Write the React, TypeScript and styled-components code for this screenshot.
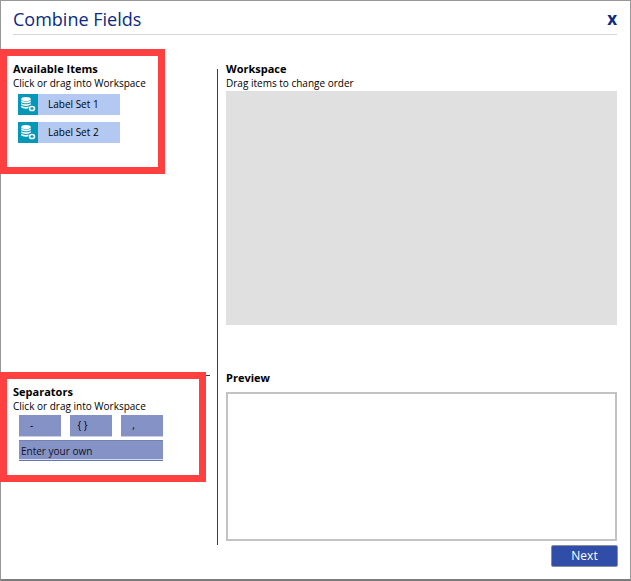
import React from "react";
import styled, { createGlobalStyle } from "styled-components";

const GlobalStyle = createGlobalStyle`
  *, *::before, *::after { box-sizing: border-box; }
  body {
    margin: 0;
    background: #fff;
    color: #000;
    font: 10px/15px "Open Sans", "Noto Sans", sans-serif;
  }
  button, input { font: inherit; color: inherit; }
`;

const Dialog = styled.main`
  display: flex;
  flex-direction: column;
  min-height: 100vh;
  border: 1px solid #989898;
  border-bottom: 2px solid #7c7c7c;
`;

const Header = styled.header`
  display: flex;
  align-items: center;
  justify-content: space-between;
  height: 34px;
  margin: 0 13px 0 12px;
  padding-top: 3px;
  border-bottom: 1px solid #d6d6d6;
`;

const Title = styled.h1`
  margin: 0;
  color: #0b2a80;
  font-size: 18px;
  line-height: 26px;
  font-weight: 400;
`;

const CloseButton = styled.button`
  padding: 0;
  border: 0;
  background: none;
  color: #0b2a80;
  font-size: 17px;
  line-height: 20px;
  font-weight: 700;
  cursor: pointer;
`;

const Body = styled.div`
  flex: 1;
  display: grid;
  grid-template-columns: 216px 1px minmax(0, 1fr);
`;

const Sources = styled.div`
  display: flex;
  flex-direction: column;
  justify-content: space-between;
  padding: 14px 0 63px;
`;

const Divider = styled.div`
  margin-top: 34px;
  background: #3c3c3c;
`;

const Highlight = styled.section<{ $wide?: boolean }>`
  width: ${(p) => (p.$wide ? "206px" : "165px")};
  min-height: ${(p) => (p.$wide ? "110px" : "125px")};
  margin-left: -1px;
  padding: 5px 6px 0;
  border: 7px solid #ff4040;
`;

const SeparatorRow = styled.div`
  display: flex;
  align-items: flex-start;
`;

const Tick = styled.div`
  width: 4px;
  height: 1px;
  margin-top: 3px;
  background: #3c3c3c;
`;

const Heading = styled.h2`
  margin: 0;
  font-size: 11px;
  line-height: 15px;
  font-weight: 700;
`;

const Hint = styled.p`
  margin: 0;
  line-height: 15px;
  white-space: nowrap;
`;

const ItemList = styled.div`
  display: flex;
  flex-direction: column;
  align-items: flex-start;
  gap: 7px;
  padding: 3px 0 0 5px;
`;

const ItemButton = styled.button`
  display: flex;
  align-items: center;
  width: 102px;
  height: 21px;
  padding: 0;
  border: 0;
  background: #b3c9f1;
  cursor: grab;
`;

const ItemIcon = styled.span`
  display: grid;
  place-items: center;
  width: 20px;
  height: 21px;
  margin-right: 10px;
  background: #0597b7;
`;

const SeparatorGrid = styled.div`
  display: grid;
  grid-template-columns: repeat(3, 42px);
  gap: 3px 9px;
  padding: 1px 0 0 6px;
`;

const SeparatorButton = styled.button`
  height: 22px;
  padding: 0 17px 0 0;
  border: 1px solid #c8d0e8;
  border-width: 0 0 1px;
  background: #8592c6;
  cursor: grab;
`;

const CustomSeparator = styled.input`
  grid-column: 1 / -1;
  width: 100%;
  height: 21px;
  padding: 0 2px;
  border: 0;
  border-top: 1px solid #7480ad;
  border-bottom: 1px solid #6676b4;
  border-radius: 0;
  background: #8592c6;
  box-shadow: inset 0 -1px #d3daee;
  &::placeholder { color: #10131f; opacity: 1; }
`;

const Output = styled.div`
  display: flex;
  flex-direction: column;
  padding: 26px 13px 0 8px;
`;

const WorkspaceArea = styled.div`
  flex: 1 1 234px;
  min-height: 160px;
  margin-bottom: 45px;
  background: #e0e0e0;
`;

const PreviewArea = styled.div`
  flex: 1 1 149px;
  min-height: 75px;
  margin: 7px 0 4px;
  border: 2px solid #c3c3c3;
`;

const Footer = styled.footer`
  display: flex;
  justify-content: flex-end;
  padding: 0 12px 12px;
`;

const NextButton = styled.button`
  width: 67px;
  height: 22px;
  padding: 0;
  border: 1px solid #8a8f9c;
  border-radius: 2px;
  background: #304da8;
  color: #fff;
  font-size: 12px;
  line-height: 20px;
  cursor: pointer;
`;

function DatabaseIcon() {
  return (
    <svg width="20" height="21" viewBox="0 0 20 21" aria-hidden="true">
      <g fill="#fff">
        <ellipse cx="8" cy="5" rx="4.800" ry="2" />
        <path d="M3.200 6.200c1 1.700 8.600 1.700 9.600 0v1.700c-1 1.900-8.600 1.900-9.600 0z" />
        <path d="M3.200 8.900c1 1.700 8.600 1.700 9.600 0v1.700c-1 1.900-8.600 1.900-9.600 0z" />
        <path d="M3.200 11.600c1 1.700 8.600 1.700 9.600 0v1.700c-1 1.900-8.600 1.900-9.600 0z" />
      </g>
      <circle cx="14" cy="14.500" r="3.700" fill="#0597b7" />
      <ellipse cx="14" cy="14.500" rx="2.500" ry="2.100" fill="none" stroke="#fff" strokeWidth="1.500" />
    </svg>
  );
}

const items = ["Label Set 1", "Label Set 2"];
const separators = ["-", "{ }", ","];

export default function App() {
  return (
    <>
      <GlobalStyle />
      <Dialog aria-labelledby="dialog-title">
        <Header>
          <Title id="dialog-title">Combine Fields</Title>
          <CloseButton type="button" aria-label="Close">x</CloseButton>
        </Header>
        <Body>
          <Sources>
            <Highlight>
              <Heading>Available Items</Heading>
              <Hint>Click or drag into Workspace</Hint>
              <ItemList>
                {items.map((item) => (
                  <ItemButton type="button" key={item}>
                    <ItemIcon><DatabaseIcon /></ItemIcon>
                    {item}
                  </ItemButton>
                ))}
              </ItemList>
            </Highlight>
            <SeparatorRow>
              <Highlight $wide>
                <Heading>Separators</Heading>
                <Hint>Click or drag into Workspace</Hint>
                <SeparatorGrid>
                  {separators.map((separator) => (
                    <SeparatorButton type="button" key={separator}>{separator}</SeparatorButton>
                  ))}
                  <CustomSeparator aria-label="Custom separator" placeholder="Enter your own" />
                </SeparatorGrid>
              </Highlight>
              <Tick />
            </SeparatorRow>
          </Sources>
          <Divider />
          <Output>
            <Heading>Workspace</Heading>
            <Hint>Drag items to change order</Hint>
            <WorkspaceArea />
            <Heading>Preview</Heading>
            <PreviewArea />
          </Output>
        </Body>
        <Footer>
          <NextButton type="button">Next</NextButton>
        </Footer>
      </Dialog>
    </>
  );
}
